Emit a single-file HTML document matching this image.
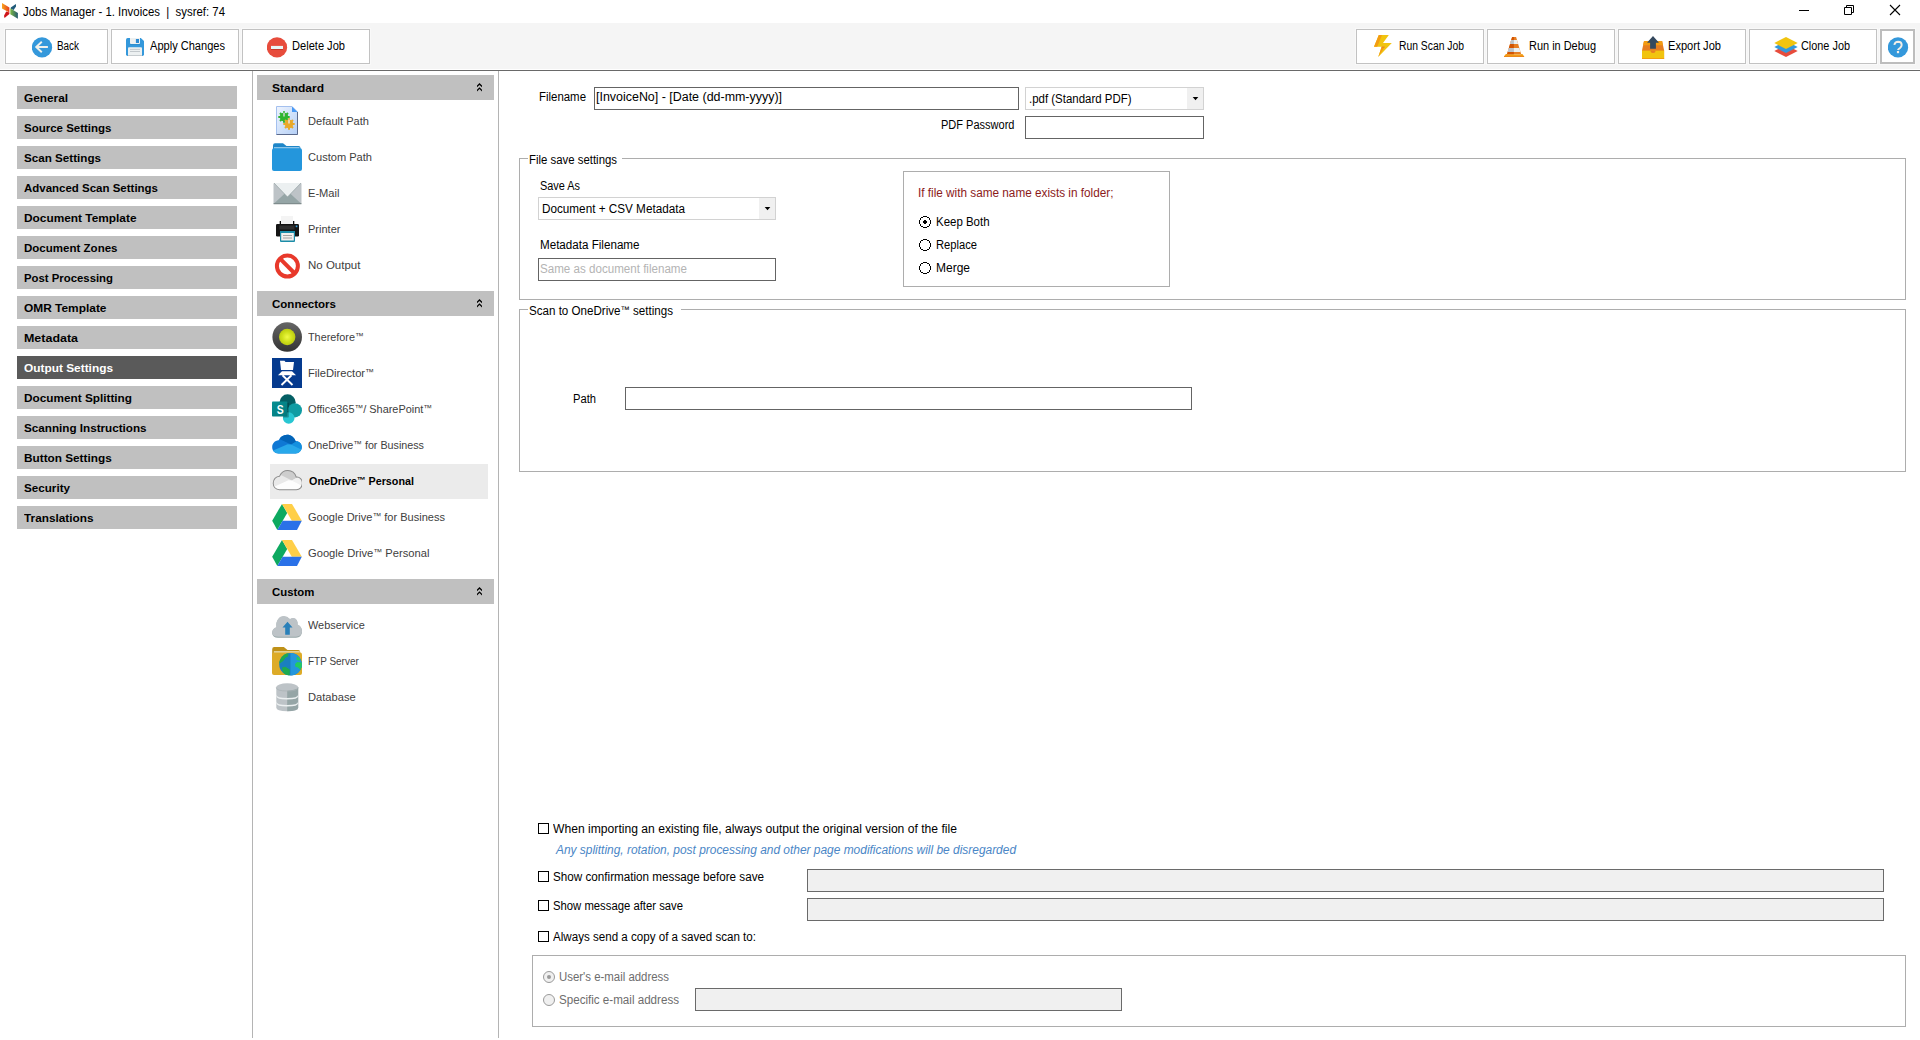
<!DOCTYPE html>
<html lang="en">
<head>
<meta charset="utf-8">
<title>Jobs Manager - 1. Invoices | sysref: 74</title>
<style>
*{box-sizing:border-box;margin:0;padding:0}
html,body{width:1920px;height:1040px;overflow:hidden;background:#fff}
body{font-family:"Liberation Sans",sans-serif;font-size:12px;color:#000;position:relative}
.abs{position:absolute}
.tm{font-size:0.8em;position:relative;top:-2.5px}
.t{position:absolute;white-space:nowrap;line-height:16px;height:16px;transform-origin:0 50%}
#titlebar{position:absolute;left:0;top:0;width:1920px;height:23px;background:#fff}
#toolbar{position:absolute;left:0;top:23px;width:1920px;height:46px;background:#f5f5f5}
#tbline{position:absolute;left:0;top:70px;width:1920px;height:1px;background:#696969}
.btn{position:absolute;top:29px;height:35px;width:128px;background:#fff;border:1px solid #c2c2c2;box-shadow:0 0 0 1px #f9f9f9}
.btn .t{top:8px}
.btn svg{position:absolute}
.nav{position:absolute;left:17px;width:220px;height:23px;background:#c0c0c0;font-weight:bold;font-size:11.5px}
.nav.sel{background:#5a5a5a;color:#fff}
.vline{position:absolute;width:1px;background:#b4b4b4}
.hdr{position:absolute;left:257px;width:237px;height:25px;background:#c0c0c0;font-weight:bold;font-size:11px}
.hdr svg{position:absolute;left:218px;top:8px}
.item{position:absolute;left:270px;width:218px;height:35px;font-size:11px;color:#404040}
.item.sel{background:#ebebeb;color:#000;font-weight:bold}
.item svg{position:absolute;left:0;top:1px}
.inp{position:absolute;height:23px;border:1px solid #646464;background:#fff;font-size:12px;line-height:19px;padding-left:2px;white-space:nowrap;overflow:hidden}
.inp.dis{background:#f0f0f0;border-color:#6a6a6a}
.combo{position:absolute;height:23px;border:1px solid #d2d2d2;background:#fff}
.combo i{position:absolute;right:0;top:0;width:16px;height:21px;background:#f0f0f0}
.combo i svg{position:absolute;left:5px;top:9px}
.gbox{position:absolute;border:1px solid #adadad}
.gbox>.lg{position:absolute;top:-6px;left:8px;background:#fff;padding:0 0 0 1px;line-height:14px;height:14px;white-space:nowrap;overflow:hidden}
.radio{position:absolute;width:12px;height:12px;border:1px solid #222;border-radius:50%;background:#fff}
.radio.on:after{content:"";position:absolute;left:3px;top:3px;width:4px;height:4px;border-radius:50%;background:#222}
.radio.dis{border-color:#9a9a9a;background:#f0f0f0}
.radio.dis.on:after{background:#9a9a9a}
.chk{position:absolute;width:11px;height:11px;border:1px solid #000;background:#fff}
</style>
</head>
<body>
<div id="titlebar">
<svg class="abs" style="left:0;top:0" width="22" height="22" viewBox="0 0 22 22">
<defs>
<linearGradient id="lgA" x1="0" y1="0" x2="1" y2="0"><stop offset="0" stop-color="#f9a51f"/><stop offset="1" stop-color="#e53a1e"/></linearGradient>
<linearGradient id="lgB" x1="0" y1="0" x2="1" y2="0"><stop offset="0" stop-color="#7cb944"/><stop offset="1" stop-color="#23586f"/></linearGradient>
</defs>
<path d="M2 2.900L9.400 7.400V12.600L2 8.600Z" fill="url(#lgA)"/>
<path d="M6.200 11.600L9.400 12.600V14L4.500 17.900L4 15.800Z" fill="#cf1419"/>
<path d="M15.900 4L16 6.600L13.600 10L10.800 8.700V7.600Z" fill="#1f5a7a"/>
<path d="M10.300 8.300L17.900 12.900V18.800L10.300 14.200Z" fill="url(#lgB)"/>
</svg>
<span class="t" style="transform:scaleX(0.9504);left:23px;top:4px">Jobs Manager - 1. Invoices &nbsp;| &nbsp;sysref: 74</span>
<svg class="abs" style="left:1790px;top:0" width="120" height="22" viewBox="0 0 120 22" fill="none" stroke="#000" stroke-width="1">
<path d="M9 10.5H19"/>
<path d="M54.5 7.5H61.5V14.5H54.5Z M56.5 7.5V5.5H63.5V12.5H61.5"/>
<path d="M100 5L110 15M110 5L100 15" stroke-width="1.1"/>
</svg>
</div>

<div id="toolbar"></div>
<div id="tbline"></div>
<div class="btn" style="left:5px;width:103px">
<svg style="left:26px;top:7px" width="21" height="22" viewBox="0 0 21 22"><circle cx="10" cy="10.400" r="10.150" fill="#3498db"/><path d="M15.900 10H4.800M9.800 4.700L4.200 10L9.800 15.300" fill="none" stroke="#f0f1ec" stroke-width="1.900"/></svg>
<span class="t" style="transform:scaleX(0.8244);left:51px">Back</span>
</div>
<div class="btn" style="left:111px">
<svg style="left:14px;top:8px" width="19" height="19" viewBox="0 0 19 19"><path d="M1.700 0H14.800L18 2.900V16.300Q18 18 16.300 18H1.700Q0 18 0 16.300V1.700Q0 0 1.700 0Z" fill="#3498db"/><path d="M4 0H14V5Q14 6 13 6H5Q4 6 4 5Z" fill="#ecf0f1"/><rect x="9.900" y="1" width="3.100" height="4" fill="#2c8ad2"/><path d="M3 9.200H15Q16 9.200 16 10.200V18H2V10.200Q2 9.200 3 9.200Z" fill="#ecf0f1"/><path d="M4 11.400H14M4 13.500H14" stroke="#bdc3c7" stroke-width="0.900"/><rect x="2" y="17.200" width="14" height="0.800" fill="#bdc3c7"/><rect x="4" y="6" width="10" height="0.700" fill="#2980b9" opacity="0.600"/></svg>
<span class="t" style="transform:scaleX(0.9215);left:38px">Apply Changes</span>
</div>
<div class="btn" style="left:242px">
<svg style="left:24px;top:7px" width="21" height="22" viewBox="0 0 21 22"><circle cx="10" cy="10.400" r="10.150" fill="#e74c3c"/><rect x="4" y="12" width="12" height="0.900" fill="#c0392b"/><rect x="4" y="8.900" width="12" height="3.100" fill="#e8f6f6"/></svg>
<span class="t" style="transform:scaleX(0.9237);left:49px">Delete Job</span>
</div>
<div class="btn" style="left:1356px">
<svg style="left:17px;top:5px" width="19" height="23" viewBox="0 0 19 23"><path d="M4.800 0.100H14.800L9 8H17.800L4.200 21.900L7.700 11.800H0Z" fill="#f1c40f"/><path d="M4.800 0.100H8L3.200 11.800H0Z M7.700 11.800H10.800L4.200 21.900Z" fill="#f39c12"/><path d="M7.700 11.800H10.800L10.400 12.600H7.400Z" fill="#e67e22"/></svg>
<span class="t" style="transform:scaleX(0.8622);left:42px">Run Scan Job</span>
</div>
<div class="btn" style="left:1487px">
<svg style="left:16px;top:7px" width="21" height="21" viewBox="0 0 21 21"><path d="M8.100 0H12.100L17.260 17.500H2.940Z" fill="#e67e22"/><path d="M8.100 0H9.900V17.500H2.940Z" fill="#d35400"/><path d="M7.240 2.900H12.960L14.140 6.900H6.060Z M4.880 10.900H15.320L16.500 14.900H3.700Z" fill="#ecf0f1"/><path d="M7.240 2.900H9.900V6.900H6.060Z M4.880 10.900H9.900V14.900H3.700Z" fill="#bdc3c7"/><path d="M1.900 16.900H3.100L2.940 17.500H17.260L17.100 16.900H18.300L20.100 19.300V20H-0.100V19.300Z" fill="#f39c12"/><path d="M-0.100 19.300H20.100V20H-0.100Z" fill="#e67e22"/></svg>
<span class="t" style="transform:scaleX(0.9129);left:41px">Run in Debug</span>
</div>
<div class="btn" style="left:1618px">
<svg style="left:23px;top:5px" width="23" height="25" viewBox="0 0 23 25"><path d="M2 6H20.100L22.100 15.600V24H0V15.600Z" fill="#e67e22"/><path d="M2 6H20.100L21 10.200H1.100Z" fill="#f39c12"/><path d="M0 15.600H22.100V23.900H0Z" fill="#f1c40f"/><path d="M0 23H22.100V23.900H0Z" fill="#f39c12"/><path d="M8.500 15.600H13.500A2.500 2.500 0 0 1 8.500 15.600Z" fill="#e67e22"/><path d="M11 0.900L17 7.800H13.900V13.800H8.100V7.800H5Z" fill="#34495e"/></svg>
<span class="t" style="transform:scaleX(0.9237);left:49px">Export Job</span>
</div>
<div class="btn" style="left:1749px">
<svg style="left:24px;top:7px" width="25" height="21" viewBox="0 0 25 21"><path d="M12 8L23.700 14L12 20L0.300 14Z" fill="#e74c3c"/><path d="M12 4L23.700 10L12 16L0.300 10Z" fill="#3498db"/><path d="M12 0L23.700 6L12 12L0.300 6Z" fill="#f1c40f"/></svg>
<span class="t" style="transform:scaleX(0.9066);left:51px">Clone Job</span>
</div>
<div class="btn" style="left:1880px;width:35px;border:2px solid #bdbdbd">
<svg style="left:6px;top:6px" width="21" height="22" viewBox="0 0 21 22"><circle cx="10" cy="10.400" r="10.150" fill="#3498db"/><path d="M6.300 7.900Q7 4.700 10.100 4.700Q13.700 4.800 13.700 7.900Q13.600 9.600 12 10.900Q10.100 12.300 9.900 13" fill="none" stroke="#f3efe8" stroke-width="1.900"/><rect x="8.900" y="14" width="2.200" height="2.200" fill="#f3efe8"/></svg>
</div>

<div class="nav" style="top:86px"><span class="t" style="transform:scaleX(1.0274);left:7px;top:4px">General</span></div>
<div class="nav" style="top:116px"><span class="t" style="transform:scaleX(0.9993);left:7px;top:4px">Source Settings</span></div>
<div class="nav" style="top:146px"><span class="t" style="transform:scaleX(1.0123);left:7px;top:4px">Scan Settings</span></div>
<div class="nav" style="top:176px"><span class="t" style="transform:scaleX(0.9984);left:7px;top:4px">Advanced Scan Settings</span></div>
<div class="nav" style="top:206px"><span class="t" style="transform:scaleX(1.0315);left:7px;top:4px">Document Template</span></div>
<div class="nav" style="top:236px"><span class="t" style="transform:scaleX(1.0022);left:7px;top:4px">Document Zones</span></div>
<div class="nav" style="top:266px"><span class="t" style="transform:scaleX(0.9875);left:7px;top:4px">Post Processing</span></div>
<div class="nav" style="top:296px"><span class="t" style="transform:scaleX(1.0355);left:7px;top:4px">OMR Template</span></div>
<div class="nav" style="top:326px"><span class="t" style="transform:scaleX(1.0830);left:7px;top:4px">Metadata</span></div>
<div class="nav sel" style="top:356px"><span class="t" style="transform:scaleX(1.0319);left:7px;top:4px">Output Settings</span></div>
<div class="nav" style="top:386px"><span class="t" style="transform:scaleX(1.0245);left:7px;top:4px">Document Splitting</span></div>
<div class="nav" style="top:416px"><span class="t" style="transform:scaleX(1.0152);left:7px;top:4px">Scanning Instructions</span></div>
<div class="nav" style="top:446px"><span class="t" style="transform:scaleX(1.0244);left:7px;top:4px">Button Settings</span></div>
<div class="nav" style="top:476px"><span class="t" style="transform:scaleX(1.0134);left:7px;top:4px">Security</span></div>
<div class="nav" style="top:506px"><span class="t" style="transform:scaleX(1.0258);left:7px;top:4px">Translations</span></div>
<div class="vline" style="left:252px;top:71px;height:967px"></div>
<div class="vline" style="left:498px;top:71px;height:967px"></div>

<div class="hdr" style="top:75px"><span class="t" style="transform:scaleX(1.0904);left:15px;top:5px">Standard</span><svg width="9" height="10" viewBox="0 0 9 10"><path d="M4.500 0L7 2.500V4.300L4.500 1.900L2 4.300V2.500Z M4.500 4.200L7 6.700V8.500L4.500 6.100L2 8.500V6.700Z" fill="#000"/></svg></div>
<div class="item" style="top:104px">
<svg width="32" height="32" viewBox="0 0 32 32"><defs><linearGradient id="dpg" x1="0" y1="0" x2="1" y2="1"><stop offset="0" stop-color="#eef4fe"/><stop offset="1" stop-color="#b4cff6"/></linearGradient></defs>
<path d="M6.500 1.500H22L27.500 7V29.500H6.500Z" fill="url(#dpg)" stroke="#a4c0ee" stroke-width="1"/>
<path d="M22 1.500V7H27.500Z" fill="#4a9af5"/>
<path d="M27.500 7V29.500H6.500" fill="none" stroke="#5b6a8c" stroke-width="1"/>
<g fill="#2fb52f"><circle cx="14" cy="12" r="4.200"/><path d="M13 6.300H15V17.700H13Z M8.300 11H19.700V13H8.300Z M9.300 8.700L10.700 7.300L18.700 15.300L17.300 16.700Z M17.300 7.300L18.700 8.700L10.700 16.700L9.300 15.300Z"/></g>
<g fill="#e9a92a"><circle cx="19" cy="19" r="4.200"/><path d="M18 13.300H20V24.700H18Z M13.300 18H24.700V20H13.300Z M14.300 15.700L15.700 14.300L23.700 22.300L22.300 23.700Z M22.300 14.300L23.700 15.700L15.700 23.700L14.300 22.300Z"/></g>
<rect x="13.300" y="7.500" width="1.400" height="4" fill="#d8d8d8"/><rect x="18.300" y="14.500" width="1.400" height="4" fill="#e8e8e8"/></svg>
<span class="t" style="transform:scaleX(1.0075);left:38px;top:9px">Default Path</span>
</div>
<div class="item" style="top:140px">
<svg width="32" height="32" viewBox="0 0 32 32"><g transform="translate(0,-1)"><path d="M3 5.500Q3 3.300 5 3.300H13L16.500 6H28.500Q30.500 6 30.500 8V12H3Z" fill="#1f86c8"/>
<rect x="4" y="7" width="25.500" height="3" fill="#8cc4e8"/>
<rect x="2" y="8.300" width="30" height="22.700" rx="2" fill="#2496dc"/></g></svg>
<span class="t" style="transform:scaleX(1.0064);left:38px;top:9px">Custom Path</span>
</div>
<div class="item" style="top:176px">
<svg width="32" height="32" viewBox="0 0 32 32"><g transform="translate(0,-1)"><rect x="3.500" y="7" width="28" height="21" rx="1" fill="#bdc3c7"/>
<path d="M3.500 28L17.500 15L31.500 28Z" fill="#95a5a6"/>
<path d="M4 7H31L17.500 21Z" fill="#ecf0f1"/>
<path d="M4 7L17.500 21L31 7" fill="none" stroke="#8a999b" stroke-width="0.600"/>
<rect x="3.500" y="27" width="28" height="1.200" rx="0.500" fill="#7f8c8d"/></g></svg>
<span class="t" style="transform:scaleX(1.0105);left:38px;top:9px">E-Mail</span>
</div>
<div class="item" style="top:212px">
<svg width="32" height="32" viewBox="0 0 32 32"><g transform="translate(0,-1)"><rect x="11" y="4" width="12" height="9" fill="#f4f4f4"/>
<rect x="9.700" y="9" width="1.300" height="4" fill="#111"/><rect x="23" y="9" width="1.300" height="4" fill="#111"/>
<rect x="6" y="12" width="23" height="12.500" rx="1.200" fill="#141414"/>
<rect x="9.500" y="13.500" width="15" height="4" fill="#303030"/>
<rect x="25.700" y="13.500" width="1.700" height="1.700" fill="#3aa4e0"/>
<path d="M10 19H25V29Q25 30 24 30H11Q10 30 10 29Z" fill="#1b8ca8"/>
<rect x="11.200" y="21" width="12.600" height="7.500" fill="#f3efec"/>
<path d="M13 23.500H22M13 26H22" stroke="#9a9a9a" stroke-width="0.900"/></g></svg>
<span class="t" style="transform:scaleX(1.0029);left:38px;top:9px">Printer</span>
</div>
<div class="item" style="top:248px">
<svg width="32" height="32" viewBox="0 0 32 32"><circle cx="17.400" cy="17.100" r="10.500" fill="#fff" stroke="#e8392b" stroke-width="4"/>
<path d="M10 9.700L24.800 24.500" stroke="#e8392b" stroke-width="4"/></svg>
<span class="t" style="transform:scaleX(1.0451);left:38px;top:9px">No Output</span>
</div>
<div class="hdr" style="top:291px"><span class="t" style="transform:scaleX(1.0470);left:15px;top:5px">Connectors</span><svg width="9" height="10" viewBox="0 0 9 10"><path d="M4.500 0L7 2.500V4.300L4.500 1.900L2 4.300V2.500Z M4.500 4.200L7 6.700V8.500L4.500 6.100L2 8.500V6.700Z" fill="#000"/></svg></div>
<div class="item" style="top:320px">
<svg width="32" height="32" viewBox="0 0 32 32"><defs><linearGradient id="thg" x1="0" y1="0" x2="0" y2="1"><stop offset="0" stop-color="#666"/><stop offset="1" stop-color="#333"/></linearGradient><radialGradient id="thy"><stop offset="0" stop-color="#f0fa46"/><stop offset="0.600" stop-color="#cfe01c"/><stop offset="1" stop-color="#bccb10"/></radialGradient></defs>
<circle cx="17.200" cy="16" r="14.800" fill="url(#thg)"/><circle cx="17.200" cy="16" r="8.200" fill="url(#thy)"/></svg>
<span class="t" style="transform:scaleX(0.9858);left:38px;top:9px">Therefore<span class="tm">™</span></span>
</div>
<div class="item" style="top:356px">
<svg width="32" height="32" viewBox="0 0 32 32"><rect x="2" y="1" width="30" height="30" fill="#053a8e"/>
<path d="M10 3.800H14.500L15.500 5H24L23 13H11Z" fill="#fff"/>
<path d="M12 14.300H22L26 18.300H8Z" fill="#fff"/>
<path d="M12.500 18.300L22.500 28M21.500 18.300L11.500 28" stroke="#fff" stroke-width="1.900"/>
</svg>
<span class="t" style="transform:scaleX(1.0149);left:38px;top:9px">FileDirector<span class="tm">™</span></span>
</div>
<div class="item" style="top:392px">
<svg width="32" height="32" viewBox="0 0 32 32"><defs><linearGradient id="spg" x1="0" y1="0" x2="1" y2="1"><stop offset="0" stop-color="#058f92"/><stop offset="1" stop-color="#03787c"/></linearGradient></defs>
<clipPath id="spc"><circle cx="17.600" cy="9.300" r="8"/><circle cx="24.900" cy="17.300" r="7.100"/><circle cx="18.700" cy="25" r="5.800"/></clipPath><circle cx="17.600" cy="9.300" r="8" fill="#045f64"/><rect x="16" y="10" width="3.200" height="11.500" fill="#04565a"/>
<circle cx="24.900" cy="17.300" r="7.100" fill="#109ca3"/>
<circle cx="18.700" cy="25" r="5.800" fill="#28c6d2"/>
<rect clip-path="url(#spc)" x="3" y="9.500" width="15.800" height="15" rx="0.800" fill="#013f42" opacity="0.400"/>
<rect x="2" y="8.500" width="15.300" height="15" rx="0.800" fill="url(#spg)"/>
<text transform="translate(10.300,20.700) scale(0.800,1)" x="0" y="0" font-family="Liberation Sans, sans-serif" font-weight="bold" font-size="13" fill="#fff" text-anchor="middle">S</text></svg>
<span class="t" style="transform:scaleX(0.9918);left:38px;top:9px">Office365<span class="tm">™</span>/ SharePoint<span class="tm">™</span></span>
</div>
<div class="item" style="top:428px">
<svg width="32" height="32" viewBox="0 0 32 32"><defs><clipPath id="odc"><path d="M8.500 24.400C4.500 24.400 2.200 21.500 2.200 18.200C2.200 14.500 4.800 11.500 8.600 11.300C10.200 8 13.300 5.800 17 5.800C21 5.800 24.300 8.300 25.600 12.200C29 11.800 31.800 14.600 31.800 18C31.800 21.600 29.200 24.400 25.600 24.400Z"/></clipPath></defs>
<g clip-path="url(#odc)"><rect x="0" y="0" width="34" height="30" fill="#0f78d4"/>
<path d="M9.900 10.200L10 0H27L26.200 12.800L21.200 15.600Z" fill="#0364b8"/>
<path d="M21.200 15.600L26.200 12.600L34 9V22L31.100 20.400Z" fill="#1490df"/>
<path d="M2 22L17.600 15.200L21.200 15.600L32.500 21V27H0Z" fill="#28a8ea"/></g></svg>
<span class="t" style="transform:scaleX(0.9759);left:38px;top:9px">OneDrive<span class="tm">™</span> for Business</span>
</div>
<div class="item sel" style="top:464px">
<svg width="32" height="32" viewBox="0 0 32 32"><defs><clipPath id="odd"><path d="M8.500 24.400C4.500 24.400 2.200 21.500 2.200 18.200C2.200 14.500 4.800 11.500 8.600 11.300C10.200 8 13.300 5.800 17 5.800C21 5.800 24.300 8.300 25.600 12.200C29 11.800 31.800 14.600 31.800 18C31.800 21.600 29.200 24.400 25.600 24.400Z"/></clipPath></defs>
<g transform="translate(0.800,0) translate(17,15.100) scale(0.985,1.030) translate(-17,-15.100)"><g clip-path="url(#odd)"><rect x="0" y="0" width="34" height="30" fill="#e9e9e9"/>
<path d="M9.900 10.200L10 0H27L26.200 12.800L21.200 15.600Z" fill="#cdcdcd"/>
<path d="M21.200 15.600L26.200 12.600L34 9V22L31.100 20.400Z" fill="#f1f1f1"/>
<path d="M2 22L17.600 15.200L21.200 15.600L32.500 21V27H0Z" fill="#fdfdfd"/></g>
<path d="M8.500 24.400C4.500 24.400 2.200 21.500 2.200 18.200C2.200 14.500 4.800 11.500 8.600 11.300C10.200 8 13.300 5.800 17 5.800C21 5.800 24.300 8.300 25.600 12.200C29 11.800 31.800 14.600 31.800 18C31.800 21.600 29.200 24.400 25.600 24.400Z" fill="none" stroke="#8c8c8c" stroke-width="1"/></g></svg>
<span class="t" style="transform:scaleX(0.9790);left:39px;top:9px">OneDrive<span class="tm">™</span> Personal</span>
</div>
<div class="item" style="top:500px">
<svg width="32" height="32" viewBox="0 0 32 32"><g transform="translate(0,-1)"><path d="M12 3.900L17.200 12.900L7.300 30L2.200 20.700Z" fill="#0da960"/>
<path d="M12 3.900H22L31.800 20.700H21.800Z" fill="#ffcf48"/>
<path d="M12.600 20.700H31.800L27 30H7.300Z" fill="#2a71e8"/></g></svg>
<span class="t" style="transform:scaleX(1.0030);left:38px;top:9px">Google Drive<span class="tm">™</span> for Business</span>
</div>
<div class="item" style="top:536px">
<svg width="32" height="32" viewBox="0 0 32 32"><g transform="translate(0,-1)"><path d="M12 3.900L17.200 12.900L7.300 30L2.200 20.700Z" fill="#0da960"/>
<path d="M12 3.900H22L31.800 20.700H21.800Z" fill="#ffcf48"/>
<path d="M12.600 20.700H31.800L27 30H7.300Z" fill="#2a71e8"/></g></svg>
<span class="t" style="transform:scaleX(1.0160);left:38px;top:9px">Google Drive<span class="tm">™</span> Personal</span>
</div>
<div class="hdr" style="top:579px"><span class="t" style="transform:scaleX(1.0329);left:15px;top:5px">Custom</span><svg width="9" height="10" viewBox="0 0 9 10"><path d="M4.500 0L7 2.500V4.300L4.500 1.900L2 4.300V2.500Z M4.500 4.200L7 6.700V8.500L4.500 6.100L2 8.500V6.700Z" fill="#000"/></svg></div>
<div class="item" style="top:608px">
<svg width="32" height="32" viewBox="0 0 32 32"><path d="M8 28.800Q2.500 28.800 2.200 24Q2 20 6.500 18.500Q5.500 12 10 8.500Q15.500 5.500 20 10.500Q21.500 9 24 9.500Q28 10.500 27.500 16Q32 17.500 32 23Q31.500 28.500 26 28.800Z" fill="#95a5a6"/>
<path d="M8 27.800Q2.500 27.800 2.200 23.500Q2 19.500 6.500 18Q5.500 11.500 10 8Q15.500 5 20 10Q21.500 8.500 24 9Q28 10 27.500 15.500Q32 17 32 22.500Q31.500 27.500 26 27.800Z" fill="#bdc3c7"/>
<path d="M17.500 12.800L22.500 18.500H19.800V25.800H15.200V18.500H12.500Z" fill="#2980b9"/></svg>
<span class="t" style="transform:scaleX(0.9919);left:38px;top:9px">Webservice</span>
</div>
<div class="item" style="top:644px">
<svg width="32" height="32" viewBox="0 0 32 32"><g transform="translate(0,-1)"><defs><clipPath id="ftpc"><circle cx="20.500" cy="20.300" r="11.300"/></clipPath></defs>
<g transform="translate(0,-1)"><path d="M2.200 6.300Q2.200 4.100 4.200 4.100H13.800L17.500 6.900H28.200Q30.200 6.900 30.200 8.900V13H2.200Z" fill="#bf9118"/>
<rect x="3.800" y="8.100" width="26" height="2" fill="#e6d7a4"/>
<rect x="2" y="9.600" width="30" height="22.300" rx="2" fill="#ddab27"/></g>
<circle cx="20.500" cy="20.300" r="11.300" fill="#1a7fc0"/>
<g clip-path="url(#ftpc)"><rect x="20.500" y="8" width="13" height="25" fill="#2496dc"/>
<path d="M18.500 8H8V20L10.100 19.200L13.300 17L15.200 14.100L17.900 12.600L18.500 9.700Z M11.900 23.600L15.500 22.800L19.900 25.800L19.600 32H15L12.600 27.200Z" fill="#1fab4f"/>
<path d="M26.900 12.600L29.100 13.700L30.900 16.300L28.300 16.600L26.500 15.500Z M25 19.900L27.200 18.100L33 18.500V23.600L30.200 25.800L28 23.600L25.400 22.800Z" fill="#22cc60"/></g></g></svg>
<span class="t" style="transform:scaleX(0.9066);left:38px;top:9px">FTP Server</span>
</div>
<div class="item" style="top:680px">
<svg width="32" height="32" viewBox="0 0 32 32"><g transform="translate(0,-1)"><path d="M6.300 7V27.500Q6.300 31.300 17.200 31.300Q28.200 31.300 28.200 27.500V7Z" fill="#bdc3c7"/>
<path d="M17.200 7H28.200V27.500Q28.200 31.300 17.200 31.300Z" fill="#95a5a6"/>
<path d="M6.300 14.500Q6.300 18 17.200 18Q28.200 18 28.200 14.500V16Q28.200 19.500 17.200 19.500Q6.300 19.500 6.300 16Z M6.300 21.500Q6.300 25 17.200 25Q28.200 25 28.200 21.500V23Q28.200 26.500 17.200 26.500Q6.300 26.500 6.300 23Z" fill="#ecf0f1"/>
<ellipse cx="17.200" cy="7" rx="10.950" ry="3.700" fill="#bdc3c7"/>
<path d="M6.300 7.500Q6.300 11 17.200 11Q28.200 11 28.200 7.500" fill="none" stroke="#a9b1b5" stroke-width="0.700"/></g></svg>
<span class="t" style="transform:scaleX(1.0129);left:38px;top:9px">Database</span>
</div>

<span class="t" style="transform:scaleX(0.9522);left:539px;top:89px">Filename</span>
<div class="inp" style="left:594px;top:87px;width:425px"><span class="t" style="transform:scaleX(1.0369);left:1px;top:1px">[InvoiceNo] - [Date (dd-mm-yyyy)]</span></div>
<div class="combo" style="left:1025px;top:87px;width:179px"><span class="t" style="transform:scaleX(0.9545);left:3px;top:3px">.pdf (Standard PDF)</span><i><svg width="7" height="4" viewBox="0 0 7 4"><path d="M0.700 0H6.300L3.500 3.300Z" fill="#000"/></svg></i></div>
<span class="t" style="transform:scaleX(0.9184);left:941px;top:117px">PDF Password</span>
<div class="inp" style="left:1025px;top:116px;width:179px"></div>

<div class="gbox" style="left:519px;top:158px;width:1387px;height:142px"><span class="lg" style="width:94px"><span class="t" style="transform:scaleX(0.9491);position:static;display:inline-block;line-height:14px;height:14px">File save settings</span></span></div>
<span class="t" style="transform:scaleX(0.9084);left:540px;top:178px">Save As</span>
<div class="combo" style="left:538px;top:197px;width:238px"><span class="t" style="transform:scaleX(0.9766);left:3px;top:3px">Document + CSV Metadata</span><i><svg width="7" height="4" viewBox="0 0 7 4"><path d="M0.700 0H6.300L3.500 3.300Z" fill="#000"/></svg></i></div>
<span class="t" style="transform:scaleX(0.9685);left:540px;top:237px">Metadata Filename</span>
<div class="inp" style="left:538px;top:258px;width:238px"><span class="t" style="transform:scaleX(0.9665);left:1px;top:2px;color:#b4b4b4">Same as document filename</span></div>
<div class="gbox" style="left:903px;top:171px;width:267px;height:116px"></div>
<span class="t" style="transform:scaleX(0.9803);left:918px;top:185px;color:#8b1a1a">If file with same name exists in folder;</span>
<svg class="abs" style="left:919px;top:216px" width="12" height="12" viewBox="0 0 12 12" shape-rendering="crispEdges"><circle cx="6" cy="6" r="5.500" fill="#fff" stroke="#000" stroke-width="1"/><path d="M5 4h2v1h1v2h-1v1h-2v-1h-1v-2h1z" fill="#000"/></svg><span class="t" style="transform:scaleX(0.9546);left:936px;top:214px">Keep Both</span>
<svg class="abs" style="left:919px;top:239px" width="12" height="12" viewBox="0 0 12 12" shape-rendering="crispEdges"><circle cx="6" cy="6" r="5.500" fill="#fff" stroke="#000" stroke-width="1"/></svg><span class="t" style="transform:scaleX(0.9312);left:936px;top:237px">Replace</span>
<svg class="abs" style="left:919px;top:262px" width="12" height="12" viewBox="0 0 12 12" shape-rendering="crispEdges"><circle cx="6" cy="6" r="5.500" fill="#fff" stroke="#000" stroke-width="1"/></svg><span class="t" style="transform:scaleX(0.9995);left:936px;top:260px">Merge</span>

<div class="gbox" style="left:519px;top:309px;width:1387px;height:163px"><span class="lg" style="width:153px"><span class="t" style="transform:scaleX(0.9663);position:static;display:inline-block;line-height:14px;height:14px">Scan to OneDrive<span class="tm">™</span> settings</span></span></div>
<span class="t" style="transform:scaleX(0.9316);left:573px;top:391px">Path</span>
<div class="inp" style="left:625px;top:387px;width:567px"></div>

<div class="chk" style="left:538px;top:823px"></div><span class="t" style="transform:scaleX(1.0111);left:553px;top:821px">When importing an existing file, always output the original version of the file</span>
<span class="t" style="transform:scaleX(0.9937);left:556px;top:842px;color:#4a86c6;font-style:italic">Any splitting, rotation, post processing and other page modifications will be disregarded</span>
<div class="chk" style="left:538px;top:871px"></div><span class="t" style="transform:scaleX(0.9733);left:553px;top:869px">Show confirmation message before save</span>
<div class="inp dis" style="left:807px;top:869px;width:1077px"></div>
<div class="chk" style="left:538px;top:900px"></div><span class="t" style="transform:scaleX(0.9415);left:553px;top:898px">Show message after save</span>
<div class="inp dis" style="left:807px;top:898px;width:1077px"></div>
<div class="chk" style="left:538px;top:931px"></div><span class="t" style="transform:scaleX(0.9661);left:553px;top:929px">Always send a copy of a saved scan to:</span>
<div class="gbox" style="left:532px;top:955px;width:1374px;height:72px"></div>
<div class="radio dis on" style="left:543px;top:971px"></div><span class="t" style="transform:scaleX(0.9510);left:559px;top:969px;color:#6d6d6d">User's e-mail address</span>
<div class="radio dis" style="left:543px;top:994px"></div><span class="t" style="transform:scaleX(0.9673);left:559px;top:992px;color:#6d6d6d">Specific e-mail address</span>
<div class="inp dis" style="left:695px;top:988px;width:427px"></div>

</body>
</html>
